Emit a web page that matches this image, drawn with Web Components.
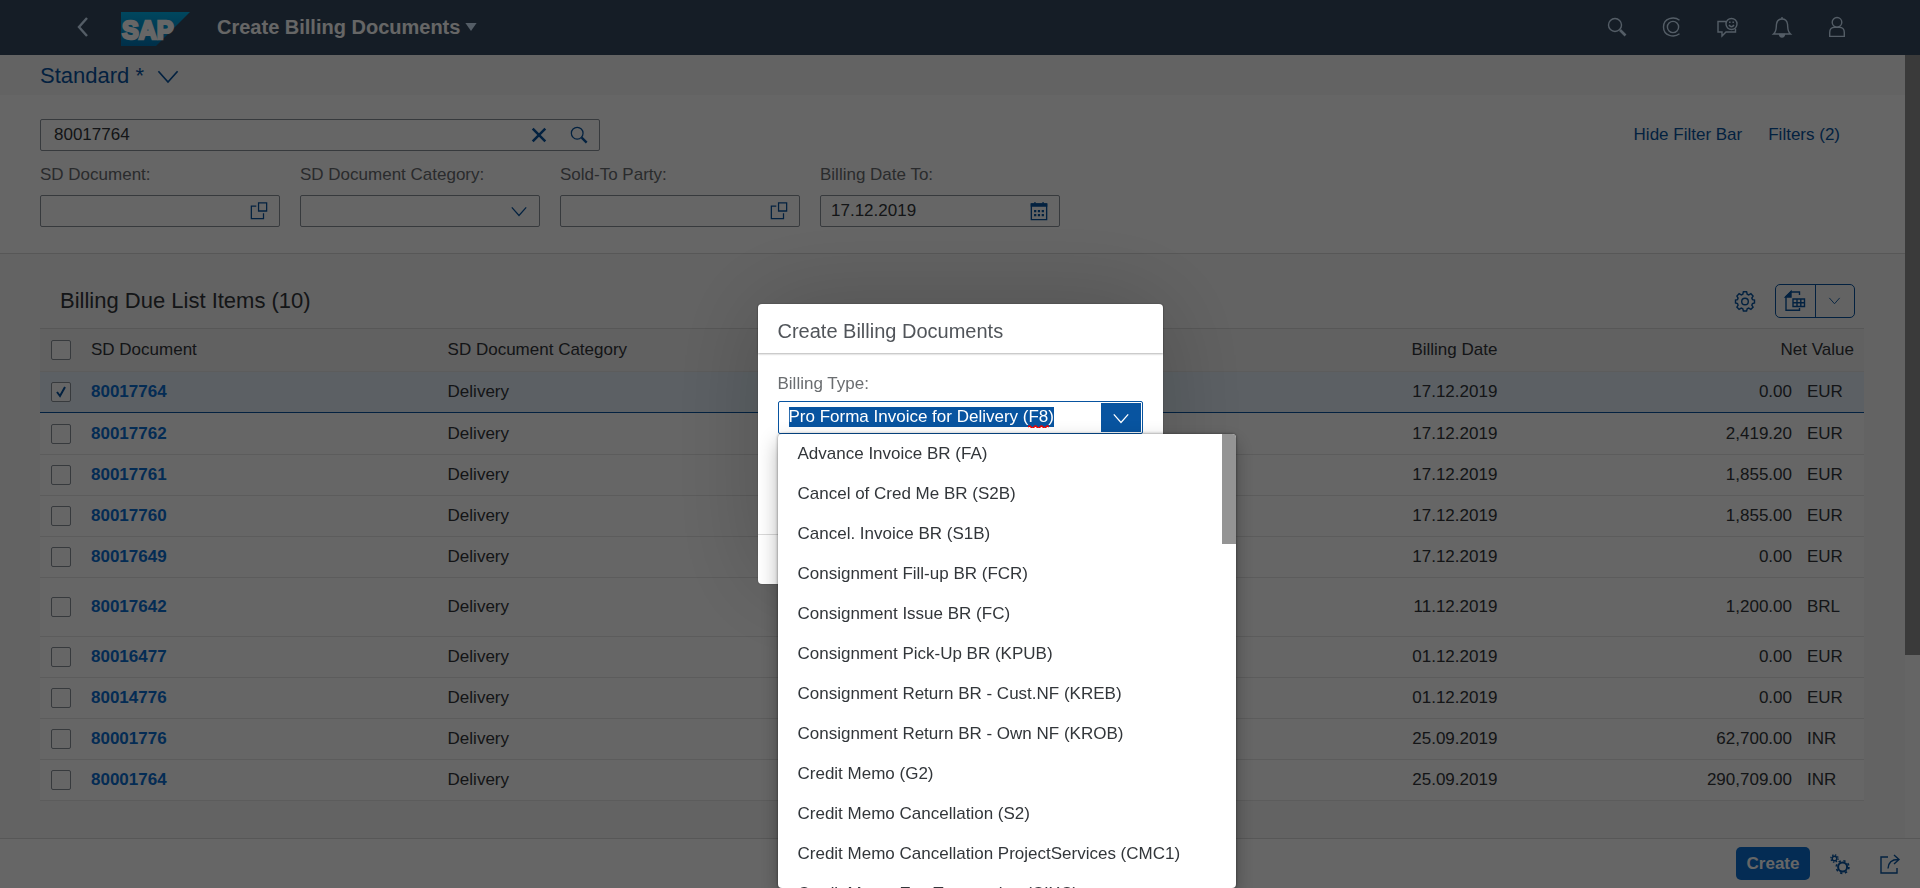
<!DOCTYPE html>
<html lang="en">
<head>
<meta charset="utf-8">
<title>Create Billing Documents</title>
<style>
  :root {
    --brand: #0854a0;
    --link: #0a6ed1;
    --text: #32363a;
    --label: #6a6d70;
    --line: #e5e5e5;
    --field-line: #89919a;
    --page: #f7f7f7;
  }
  body {
    margin: 0;
    font: 17px/20px "Liberation Sans", Arial, sans-serif;
    color: var(--text);
    background: var(--page);
    overflow: hidden;
  }
</style>
</head>
<body>
<billing-app></billing-app>

<script>
const ICONS = {
  back: '<path d="M13 1 5 10l8 9" stroke-width="2.4"/>',
  down: '<path d="m2 6 8 9 8-9" stroke-width="1.4"/>',
  triangle: '<path d="M3 5h14l-7 10z" fill="currentColor" stroke="none"/>',
  search: '<circle cx="8" cy="8" r="6.5"/><path d="m13 13 5.5 5.5" stroke-width="2.6"/>',
  clear: '<path d="m3 3 14 14M17 3 3 17" stroke-width="2.8"/>',
  copilot: '<path d="M17.5 3.2C12-1 1.5 1 1.500 10S12 21 17.500 16.800"/><circle cx="11" cy="10" r="5.6"/>',
  feedback: '<path d="M9 4.500H1v10.500h4v4l4-4h9.500v-3"/><circle cx="14.500" cy="7" r="5.500"/><path d="M12 8q2.500 3.500 5 0"/><path d="M12.800 4.500v1.500M16.200 4.500v1.500" stroke-width="1.500"/>',
  bell: '<path d="M1.500 17C5 14 4 10 4.500 7 5 3.500 7.500 2 10 2s5 1.500 5.500 5c.5 3-.5 7 3 10z"/><path d="M7.500 17.500h5Q12 20 10 20t-2.500-2.500z" fill="currentColor"/><path d="M10 0v2"/>',
  person: '<circle cx="10" cy="5.300" r="4.800"/><path d="M2.700 19.400v-4q0-5 5-5h4.600q5 0 5 5v4z"/>',
  valuehelp: '<path d="M9.500 1h9v9h-9zM7 4.500H1.500v14H15v-6"/>',
  calendar: '<path d="M1.500 2.500h17v17h-17z" stroke-width="1.500"/><path d="M1.500 2h17v2.500h-17z" fill="currentColor"/><path d="M5.500 0v2M14.500 0v2"/><path d="M4.500 10H7M8.700 10h2.500M13 10h2.500M4.500 14.500H7M8.700 14.500h2.500M13 14.500h2.500" stroke-width="2.500"/>',
  gear: '<path d="M8.400.8h3.200l.6 2.400 1.500.7 2.200-1.200 2.200 2.300-1.300 2.100.7 1.500 2 .5v2.800l-2 .6-.7 1.600 1.300 2-2.200 2.300-2.200-1.300-1.500.7-.6 2.200H8.400l-.6-2.200-1.500-.7-2.200 1.300-2.200-2.300 1.200-2-.6-1.600-2-.6V9.100l2-.5.6-1.500-1.200-2.100 2.200-2.300 2.200 1.200 1.500-.7z"/><circle cx="10" cy="10.500" r="3.300"/>',
  excel: '<path d="M14.500 4V1H6L1 5.500V19.300h13.500V17"/><path d="M6 .5V6H.500z" fill="currentColor"/><path d="M8 8h11.500v7.500H8zM8 11.700h11.500M12 8v7.500M15.800 8v7.500" stroke-width="1.400"/>',
  gears: '<circle cx="12.600" cy="13" r="4.500" stroke-width="2"/><circle cx="12.600" cy="13" r="6.300" stroke-width="1.700" stroke-dasharray="2.300 2.650"/><circle cx="4.500" cy="4.500" r="2.300"/><circle cx="4.500" cy="4.500" r="3.600" stroke-width="1.400" stroke-dasharray="1.400 1.430"/>',
  share: '<path d="M8 3H1v16h16v-5"/><path d="M8 14.500Q8.500 5.500 18 5.500M14 1l5 4.500-5 4.500"/>'
};

function define(name, html, setup) {
  customElements.define(name, class extends HTMLElement {
    connectedCallback() {
      if (this.shadowRoot) return;
      const root = this.attachShadow({ mode: 'open' });
      const template = document.createElement('template');
      template.innerHTML = typeof html === 'function' ? html(this) : html;
      root.append(template.content.cloneNode(true));
      if (setup) setup(root, this);
    }
  });
}

define('ui-icon', el => `
  <style>
    :host { display: inline-block; width: 20px; height: 20px; flex: none; }
    svg { display: block; width: 100%; height: 100%; overflow: visible; }
  </style>
  <svg viewBox="0 0 20 20" fill="none" stroke="currentColor" stroke-width="1.400" aria-hidden="true">${ICONS[el.getAttribute('name')]}</svg>`);

/* Icon-only button without a frame */
define('icon-button', el => `
  <style>
    :host { display: inline-flex; color: var(--brand); --size: 20px; }
    button { display: flex; border: 0; padding: 0; background: none; color: inherit; }
    ui-icon { width: var(--size); height: var(--size); }
  </style>
  <button type="button" aria-label="${el.getAttribute('label')}"><ui-icon name="${el.getAttribute('icon')}"></ui-icon></button>`);

define('shell-header', `
  <style>
    :host { display: block; background: #354a5f; color: #d1e8ff; }
    header { display: flex; align-items: center; box-sizing: border-box; height: 55px; padding: 0 73px 2px 74px; }
    icon-button { color: inherit; --size: 20px; }
    .back { margin-right: 27px; }
    .logo { width: 69px; height: 34px; margin: 4px 27px 0 0; }
    h1 { flex: 1; margin: 0; display: flex; align-items: center; gap: 3px; font-size: 20px; line-height: 24px; font-weight: 700; color: #fff; }
    h1 ui-icon { width: 16px; height: 16px; color: #d1e8ff; }
    nav { display: flex; gap: 35px; color: #d1e8ff; }
  </style>
  <header>
    <icon-button class="back" icon="back" label="Back"></icon-button>
    <svg class="logo" viewBox="0 0 69 34" role="img" aria-label="SAP">
      <defs><linearGradient id="g" x1="0" y1="0" x2="0" y2="1"><stop stop-color="#00b1eb"/><stop offset="1" stop-color="#0077b8"/></linearGradient></defs>
      <path d="M0 0h69L35 34H0z" fill="url(#g)"/>
      <text x="1" y="27" font-family="Liberation Sans, Arial, sans-serif" font-weight="700" font-size="25" fill="#fff" stroke="#fff" stroke-width="2.400">SAP</text>
    </svg>
    <h1>Create Billing Documents <ui-icon name="triangle"></ui-icon></h1>
    <nav>
      <icon-button icon="search" label="Search"></icon-button>
      <icon-button icon="copilot" label="CoPilot"></icon-button>
      <icon-button icon="feedback" label="Feedback"></icon-button>
      <icon-button icon="bell" label="Notifications"></icon-button>
      <icon-button icon="person" label="User"></icon-button>
    </nav>
  </header>`);

define('variant-bar', `
  <style>
    :host { display: block; }
    button { display: flex; align-items: center; gap: 12px; height: 40px; margin: 0 40px; padding: 1px 0 0;
      border: 0; background: none; font: inherit; font-size: 22px; color: var(--brand); }
    ui-icon { width: 24px; height: 24px; }
  </style>
  <button type="button">Standard * <ui-icon name="down"></ui-icon></button>`);

define('filter-field', el => {
  const icon = el.getAttribute('icon');
  const control = icon === 'down'
    ? '<select id="c"><option></option></select><ui-icon class="down" name="down"></ui-icon>'
    : `<input id="c" type="text" value="${el.getAttribute('value') || ''}"><icon-button icon="${icon}" label="Open"></icon-button>`;
  return `
  <style>
    :host { display: block; width: 240px; }
    label { display: block; line-height: 20px; margin-bottom: 10px; color: var(--label); }
    .box { display: flex; align-items: center; height: 32px; box-sizing: border-box; padding: 0 11px 0 0;
      border: 1px solid var(--field-line); border-radius: 2px; background: #fff; }
    input, select { flex: 1; min-width: 0; height: 30px; padding: 0 0 0 10px; border: 0; outline: 0; background: none;
      font: inherit; color: var(--text); appearance: none; }
    .down { width: 18px; height: 18px; color: var(--brand); }
    icon-button { --size: 18px; }
  </style>
  <label for="c">${el.getAttribute('label')}:</label>
  <div class="box">${control}</div>`;
});

define('filter-bar', `
  <style>
    :host { display: block; background: #fff; border-bottom: 1px solid #d9d9d9; }
    form { padding: 24px 65px 26px 40px; }
    .top, .fields { display: flex; align-items: center; }
    .search { display: flex; align-items: center; gap: 22px; width: 560px; height: 32px; box-sizing: border-box;
      padding: 0 11px 0 13px; border: 1px solid var(--field-line); border-radius: 2px; }
    .search input { flex: 1; min-width: 0; border: 0; outline: 0; padding: 0; background: none; font: inherit; color: var(--text); }
    .search icon-button { --size: 18px; }
    .links { display: flex; gap: 26px; margin-left: auto; }
    a { color: var(--brand); text-decoration: none; }
    .fields { gap: 20px; margin-top: 14px; }
  </style>
  <form>
    <div class="top">
      <div class="search">
        <input type="text" aria-label="Search" value="80017764">
        <icon-button icon="clear" label="Clear"></icon-button>
        <icon-button icon="search" label="Search"></icon-button>
      </div>
      <div class="links"><a href="#">Hide Filter Bar</a><a href="#">Filters (2)</a></div>
    </div>
    <div class="fields">
      <filter-field label="SD Document" icon="valuehelp"></filter-field>
      <filter-field label="SD Document Category" icon="down"></filter-field>
      <filter-field label="Sold-To Party" icon="valuehelp"></filter-field>
      <filter-field label="Billing Date To" icon="calendar" value="17.12.2019"></filter-field>
    </div>
  </form>`);

const ITEMS = [
  ['80017764', '17.12.2019', '0.00', 'EUR', 'selected'],
  ['80017762', '17.12.2019', '2,419.20', 'EUR', ''],
  ['80017761', '17.12.2019', '1,855.00', 'EUR', ''],
  ['80017760', '17.12.2019', '1,855.00', 'EUR', ''],
  ['80017649', '17.12.2019', '0.00', 'EUR', ''],
  ['80017642', '11.12.2019', '1,200.00', 'BRL', 'tall'],
  ['80016477', '01.12.2019', '0.00', 'EUR', ''],
  ['80014776', '01.12.2019', '0.00', 'EUR', ''],
  ['80001776', '25.09.2019', '62,700.00', 'INR', ''],
  ['80001764', '25.09.2019', '290,709.00', 'INR', '']
];

define('billing-table', () => `
  <style>
    :host { display: block; padding: 29px 41px 36px 40px; }
    .bar { display: flex; align-items: center; height: 35px; padding: 0 9px 10px 20px; }
    h2 { flex: 1; margin: 0; font-size: 22px; line-height: 26px; font-weight: 400; }
    .split { display: flex; margin-left: 20px; border: 1px solid var(--brand); border-radius: 5px; }
    .split button { display: flex; align-items: center; justify-content: center; width: 39px; height: 32px; padding: 0 2px 0 0; border: 0; background: none; color: var(--brand); }
    .split button + button { border-left: 1px solid var(--brand); }
    .split .small { width: 13px; height: 13px; }
    table { width: 100%; table-layout: fixed; border-collapse: separate; border-spacing: 0; }
    col.check { width: 41px; }
    th, td { box-sizing: border-box; height: 41px; padding: 0 10px; border-bottom: 1px solid var(--line); font-weight: 400; text-align: left; background: #fff; }
    th { height: 44px; background: #f2f2f2; border-top: 1px solid #d9d9d9; }
    .end { text-align: right; }
    .check { padding: 0 0 0 11px; }
    .selected td { background: #e5f0fa; border-bottom-color: var(--brand); }
    .selected + tr td { height: 42px; }
    .tall td { height: 59px; }
    input { display: block; appearance: none; box-sizing: border-box; width: 20px; height: 20px; margin: 0; border: 1px solid var(--field-line); border-radius: 2px; background: #fff; }
    input:checked { background: #fff url("data:image/svg+xml,%3Csvg xmlns='http://www.w3.org/2000/svg' viewBox='0 0 18 18'%3E%3Cpath d='M5 9l3 4 5-9' fill='none' stroke='%230854a0' stroke-width='2'/%3E%3C/svg%3E"); }
    a { color: var(--link); font-weight: 700; text-decoration: none; }
    .value { display: flex; justify-content: flex-end; gap: 15px; }
    .value span:last-child { width: 47px; }
  </style>
  <div class="bar">
    <h2>Billing Due List Items (10)</h2>
    <icon-button icon="gear" label="Settings"></icon-button>
    <div class="split">
      <button type="button" aria-label="Export"><ui-icon name="excel"></ui-icon></button>
      <button type="button" aria-label="Export options"><ui-icon class="small" name="down"></ui-icon></button>
    </div>
  </div>
  <table>
    <colgroup><col class="check"><col><col><col><col><col></colgroup>
    <thead><tr>
      <th class="check"><input type="checkbox" aria-label="Select all"></th>
      <th>SD Document</th><th>SD Document Category</th><th></th><th class="end">Billing Date</th><th class="end">Net Value</th>
    </tr></thead>
    <tbody>${ITEMS.map(([id, date, amount, currency, kind]) => `
      <tr class="${kind}">
        <td class="check"><input type="checkbox" aria-label="Select ${id}"${kind === 'selected' ? ' checked' : ''}></td>
        <td><a href="#">${id}</a></td><td>Delivery</td><td></td><td class="end">${date}</td>
        <td><div class="value"><span>${amount}</span><span>${currency}</span></div></td>
      </tr>`).join('')}
    </tbody>
  </table>`);

define('footer-bar', `
  <style>
    :host { display: block; background: #fff; border-top: 1px solid #d9d9d9; }
    footer { display: flex; align-items: center; justify-content: flex-end; height: 49px; padding-right: 20px; box-sizing: border-box; }
    .create { height: 33px; width: 74px; padding: 0; border: 0; border-radius: 5px; margin-right: 20px; background: var(--link); color: #fff; font: inherit; font-weight: 700; }
    icon-button + icon-button { margin-left: 30px; }
  </style>
  <footer>
    <button class="create" type="button">Create</button>
    <icon-button icon="gears" label="Background jobs"></icon-button>
    <icon-button icon="share" label="Share"></icon-button>
  </footer>`);

const TYPES = [
  'Advance Invoice BR (FA)', 'Cancel of Cred Me BR (S2B)', 'Cancel. Invoice BR (S1B)',
  'Consignment Fill-up BR (FCR)', 'Consignment Issue BR (FC)', 'Consignment Pick-Up BR (KPUB)',
  'Consignment Return BR - Cust.NF (KREB)', 'Consignment Return BR - Own NF (KROB)',
  'Credit Memo (G2)', 'Credit Memo Cancellation (S2)',
  'Credit Memo Cancellation ProjectServices (CMC1)', 'Credit Memo Ext. Transaction (CIXC)'
];

define('combo-box', el => `
  <style>
    :host { display: block; position: relative; }
    label { display: block; margin-bottom: 7px; color: var(--label); }
    .box { display: flex; height: 33px; box-sizing: border-box; padding: 1px; border: 1px solid var(--brand); border-radius: 2px; background: #fff; }
    .text { position: relative; flex: 1; min-width: 0; display: flex; }
    input { flex: 1; min-width: 0; padding: 0 0 1px 9px; border: 0; outline: 0; font: inherit; color: var(--text); background: none; }
    input::selection { background: var(--brand); color: #fff; }
    .squiggle { position: absolute; left: 248px; top: 22px; width: 21px; height: 3px; }
    .box button { display: flex; align-items: center; justify-content: center; width: 40px; padding: 0; border: 0; background: var(--brand); color: #fff; }
    .box ui-icon { width: 18px; height: 18px; }
    .menu { position: absolute; z-index: 1; top: 100%; left: 0; width: 458px; height: calc(50vh + 10px); display: flex;
      border-radius: 4px; background: #fff; overflow: hidden; box-shadow: 0 0 3px rgba(0,0,0,.5), 0 8px 20px rgba(0,0,0,.3); }
    ul { flex: 1; margin: 0; padding: 0; list-style: none; }
    li { height: 40px; padding: 0 20px; line-height: 39px; white-space: nowrap; }
    .thumb { width: 14px; height: 110px; background: #949494; }
  </style>
  <label for="c">${el.getAttribute('label')}:</label>
  <div class="box">
    <div class="text">
      <input id="c" type="text" spellcheck="false" autocomplete="off" value="Pro Forma Invoice for Delivery (F8)">
      <svg class="squiggle" viewBox="0 0 21 3" aria-hidden="true"><path d="M0 2q1.500-2 3 0t3 0 3 0 3 0 3 0 3 0 3 0" fill="none" stroke="#e00" stroke-width="1.500"/></svg>
    </div>
    <button type="button" aria-label="Show billing types"><ui-icon name="down"></ui-icon></button>
  </div>
  <div class="menu">
    <ul role="listbox">${TYPES.map(t => `<li role="option">${t}</li>`).join('')}</ul>
    <div class="thumb"></div>
  </div>`,
  root => { const input = root.querySelector('input'); input.focus(); input.select(); });

define('billing-dialog', `
  <style>
    :host { position: fixed; inset: 0; display: grid; place-items: center; background: rgba(0,0,0,.6); }
    section { display: flex; flex-direction: column; width: 405px; height: 280px; border-radius: 4px; background: #fff;
      box-shadow: 0 0 2px rgba(0,0,0,.3), 0 0 100px rgba(0,0,0,.2); }
    h2 { margin: 0; padding: 0 20px; height: 49px; line-height: 54px; font-size: 20px; font-weight: 400; color: #51555a;
      box-shadow: 0 1px 2px rgba(0,0,0,.3); }
    .body { flex: 1; padding: 21px 20px 0; }
    .foot { height: 49px; border-top: 1px solid #d9d9d9; }
  </style>
  <section role="dialog" aria-labelledby="t">
    <h2 id="t">Create Billing Documents</h2>
    <div class="body"><combo-box label="Billing Type"></combo-box></div>
    <div class="foot"></div>
  </section>`);

define('billing-app', `
  <style>
    :host { display: flex; flex-direction: column; min-height: 100vh; }
    main { flex: 1; display: grid; grid-template-columns: 1fr 15px; }
    .track { background: #fdfdfd; }
    .thumb { height: 600px; background: #919191; }
  </style>
  <shell-header></shell-header>
  <main>
    <div>
      <variant-bar></variant-bar>
      <filter-bar></filter-bar>
      <billing-table></billing-table>
    </div>
    <div class="track"><div class="thumb"></div></div>
  </main>
  <footer-bar></footer-bar>
  <billing-dialog></billing-dialog>`);
</script>
</body>
</html>
